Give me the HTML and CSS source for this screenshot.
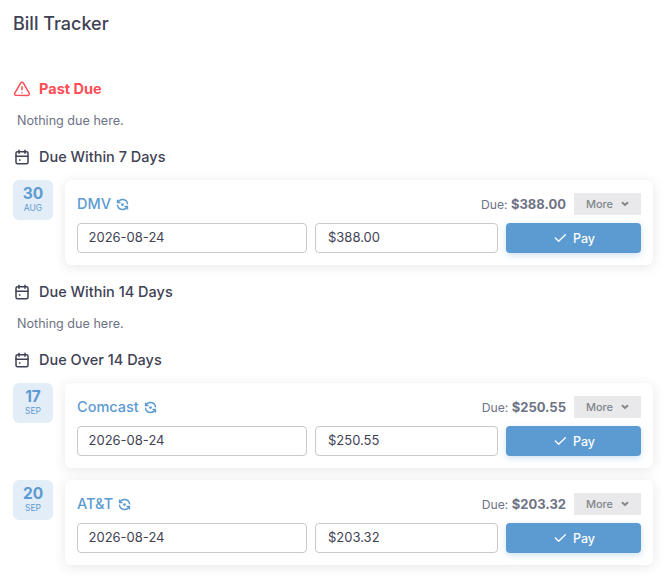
FILE: index.html
```html
<!DOCTYPE html>
<html lang="en">
<head>
  <meta charset="UTF-8" />
  <title>Bill Tracker</title>
  <link rel="stylesheet" href="styles.css">
</head>
<body>
  <svg width="0" height="0" class="sprites">
    <symbol id="cal" viewBox="0 0 24 24">
      <rect x="4" y="5" width="16" height="16" rx="2" fill="none" stroke="currentColor" stroke-width="2"/>
      <path d="M16 3v4M8 3v4M4 11h16" fill="none" stroke="currentColor" stroke-width="2" stroke-linecap="round"/>
      <rect x="8" y="15" width="2" height="2" fill="currentColor"/>
    </symbol>
    <symbol id="sync" viewBox="0 0 24 24">
      <path d="M20 11A8.1 8.1 0 0 0 4.5 9M4 5v4h4M4 13a8.1 8.1 0 0 0 15.5 2M20 19v-4h-4" fill="none" stroke="currentColor" stroke-width="2.2" stroke-linecap="round" stroke-linejoin="round"/>
      <circle cx="12" cy="12" r="2.2" fill="currentColor"/>
    </symbol>
    <symbol id="check" viewBox="0 0 24 24">
      <path d="M5 12l5 5L20 7" fill="none" stroke="currentColor" stroke-width="2" stroke-linecap="round" stroke-linejoin="round"/>
    </symbol>
    <symbol id="chevron" viewBox="0 0 8 6">
      <path d="M1 1.2l3 2.8 3-2.8" fill="none" stroke="currentColor" stroke-width="2"/>
    </symbol>
  </svg>

  <h1 class="page-title">Bill Tracker</h1>

  <h2 class="section-title past-due">
    <svg class="section-icon" viewBox="0 0 24 24"><path d="M12 9v4M12 17h.01M10.3 3.9 2.4 17.5A2 2 0 0 0 4.1 20.5h15.8a2 2 0 0 0 1.7-3L13.7 3.9a2 2 0 0 0-3.4 0z" fill="none" stroke="currentColor" stroke-width="2" stroke-linecap="round" stroke-linejoin="round"/></svg>
    Past Due
  </h2>
  <p class="empty">Nothing due here.</p>

  <h2 class="section-title">
    <svg class="section-icon"><use href="#cal"/></svg>
    Due Within 7 Days
  </h2>
  <div class="bill">
    <div class="date-box"><span class="day">30</span><span class="month">AUG</span></div>
    <div class="card">
      <div class="card-top">
        <a class="bill-name">DMV <svg class="sync"><use href="#sync"/></svg></a>
        <span class="due">Due: <b>$388.00</b></span>
        <button class="more">More <svg class="chevron"><use href="#chevron"/></svg></button>
      </div>
      <div class="card-form">
        <input class="date-input" type="text" value="2026-08-24">
        <input class="amount-input" type="text" value="$388.00">
        <button class="pay"><svg class="check"><use href="#check"/></svg> Pay</button>
      </div>
    </div>
  </div>

  <h2 class="section-title">
    <svg class="section-icon"><use href="#cal"/></svg>
    Due Within 14 Days
  </h2>
  <p class="empty">Nothing due here.</p>

  <h2 class="section-title">
    <svg class="section-icon"><use href="#cal"/></svg>
    Due Over 14 Days
  </h2>
  <div class="bill">
    <div class="date-box"><span class="day">17</span><span class="month">SEP</span></div>
    <div class="card">
      <div class="card-top">
        <a class="bill-name">Comcast <svg class="sync"><use href="#sync"/></svg></a>
        <span class="due">Due: <b>$250.55</b></span>
        <button class="more">More <svg class="chevron"><use href="#chevron"/></svg></button>
      </div>
      <div class="card-form">
        <input class="date-input" type="text" value="2026-08-24">
        <input class="amount-input" type="text" value="$250.55">
        <button class="pay"><svg class="check"><use href="#check"/></svg> Pay</button>
      </div>
    </div>
  </div>
  <div class="bill">
    <div class="date-box"><span class="day">20</span><span class="month">SEP</span></div>
    <div class="card">
      <div class="card-top">
        <a class="bill-name">AT&amp;T <svg class="sync"><use href="#sync"/></svg></a>
        <span class="due">Due: <b>$203.32</b></span>
        <button class="more">More <svg class="chevron"><use href="#chevron"/></svg></button>
      </div>
      <div class="card-form">
        <input class="date-input" type="text" value="2026-08-24">
        <input class="amount-input" type="text" value="$203.32">
        <button class="pay"><svg class="check"><use href="#check"/></svg> Pay</button>
      </div>
    </div>
  </div>
</body>
</html>
```

FILE: styles.css
```css
body {
  font-family: Inter, "Liberation Sans", sans-serif;
  margin: 0;
  padding: 0 17px 0 13px;
  background: #fff;
  color: #3f4254;
  height: 582px;
  box-sizing: border-box;
  overflow: hidden;
}
.sprites {
  position: absolute;
}
.page-title {
  margin: 0;
  padding-top: 12px;
  height: 59px;
  font-size: 18px;
  line-height: 24px;
  font-weight: 500;
}
.section-title {
  display: flex;
  align-items: center;
  gap: 8px;
  margin: 0;
  height: 20px;
  font-size: 14.5px;
  line-height: 20px;
  font-weight: 500;
}
.past-due {
  margin-top: 8px;
  color: #ff4d55;
  font-weight: 700;
}
.section-icon {
  width: 18px;
  height: 18px;
}
.empty {
  margin: 0;
  padding: 12px 0 16px 4px;
  height: 20px;
  font-size: 12.6px;
  line-height: 20px;
  color: #6e7385;
}
.bill {
  display: flex;
  gap: 12px;
  margin-bottom: 12px;
  align-items: flex-start;
}
.section-title + .bill {
  margin-top: 13px;
}
.bill + .section-title {
  margin-top: 17px;
}
.date-box {
  display: flex;
  flex-direction: column;
  align-items: center;
  justify-content: center;
  width: 40px;
  height: 40px;
  flex: none;
  border-radius: 6px;
  background: #e3edf7;
  color: #5b9bd1;
}
.day {
  font-size: 15.5px;
  line-height: 16px;
  font-weight: 700;
}
.month {
  font-size: 8.5px;
  line-height: 12px;
}
.card {
  flex: 1;
  height: 85px;
  box-sizing: border-box;
  padding: 13px 12px 0;
  background: #fff;
  border-radius: 6px;
  box-shadow: 0 2px 12px rgba(60, 60, 80, 0.12);
}
.card-top {
  display: flex;
  align-items: center;
  height: 22px;
  margin-bottom: 8px;
}
.bill-name {
  display: flex;
  align-items: center;
  gap: 4px;
  padding-bottom: 2px;
  font-size: 14.5px;
  font-weight: 500;
  color: #5b9bd1;
  margin-right: auto;
}
.sync {
  width: 15px;
  height: 15px;
  margin-top: 2px;
}
.due {
  padding-bottom: 1px;
  font-size: 12.2px;
  color: #6e7385;
  margin-right: 8px;
}
.due b {
  font-size: 13px;
}
.more {
  display: flex;
  align-items: center;
  justify-content: center;
  gap: 8px;
  width: 67px;
  height: 22px;
  padding: 0;
  border: none;
  background: #e9e9ec;
  color: #82868b;
  font-family: inherit;
  font-size: 11px;
  font-weight: 500;
}
.chevron {
  width: 8px;
  height: 6px;
}
.card-form {
  display: flex;
  gap: 8px;
}
input {
  box-sizing: border-box;
  height: 30px;
  padding: 0 10.5px 2px;
  border: 1px solid #c9c9c9;
  border-radius: 4px;
  font-family: inherit;
  font-size: 13px;
  color: #3f4254;
  outline: none;
}
.date-input {
  width: 230px;
}
.amount-input {
  width: 183px;
  padding-left: 12px;
}
.pay {
  display: flex;
  align-items: center;
  justify-content: center;
  gap: 5px;
  flex: 1;
  height: 30px;
  padding: 0;
  border: none;
  border-radius: 4px;
  background: #5b9bd1;
  color: #fff;
  font-family: inherit;
  font-size: 12.5px;
  font-weight: 500;
  box-shadow: 0 2px 6px rgba(91, 155, 209, 0.3);
}
.check {
  width: 16px;
  height: 16px;
}
```
